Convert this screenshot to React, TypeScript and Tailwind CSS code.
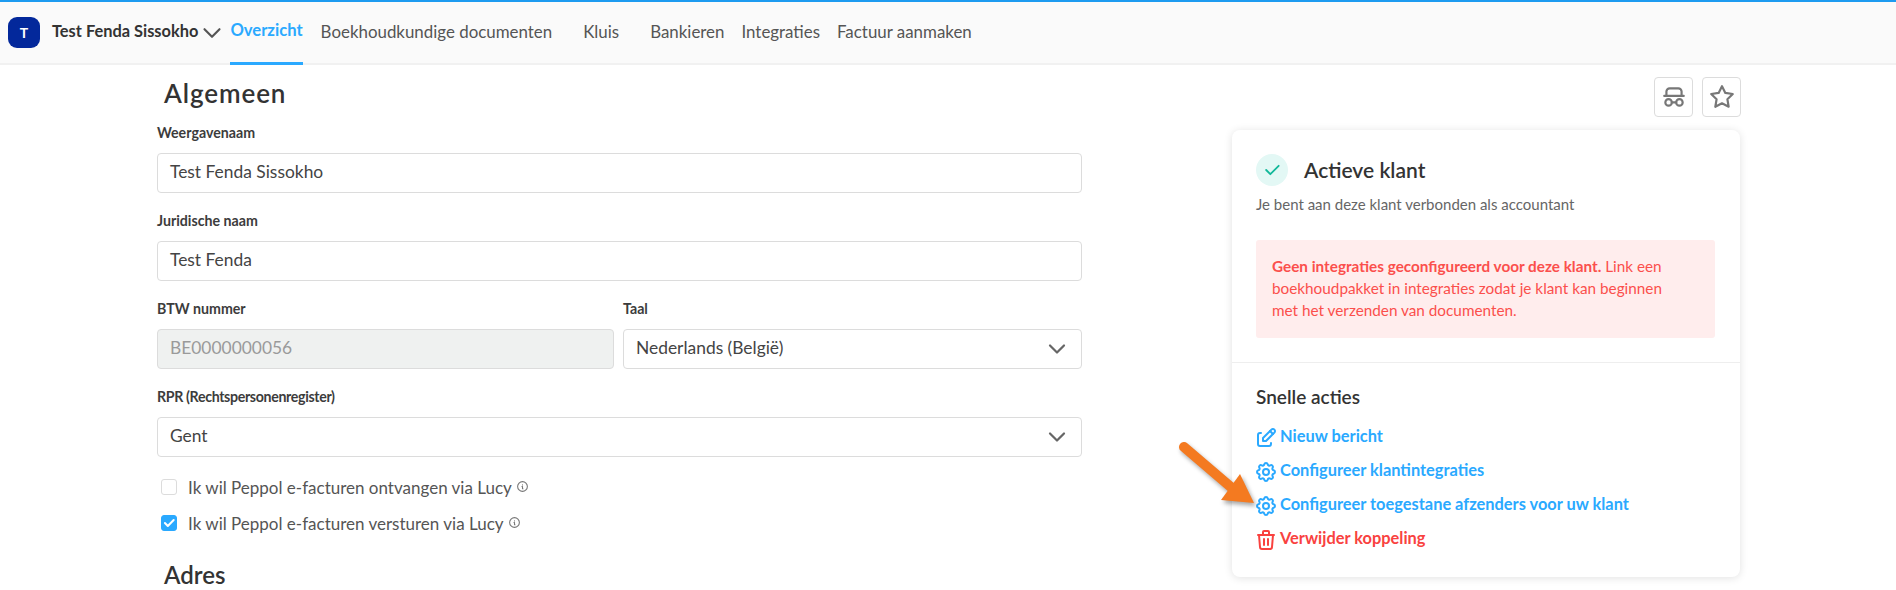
import { TbCheck, TbChevronDown, TbEdit, TbInfoCircle, TbSettings, TbSpy, TbStar, TbTrash } from "react-icons/tb";

const tabs = [
  { label: "Boekhoudkundige documenten", className: "ml-[18px]" },
  { label: "Kluis", className: "ml-[31px]" },
  { label: "Bankieren", className: "ml-[31px]" },
  { label: "Integraties", className: "ml-[17px]" },
  { label: "Factuur aanmaken", className: "ml-[17px]" },
];

const actions = [
  { icon: TbEdit, label: "Nieuw bericht", className: "text-[#2aa9ff]" },
  { icon: TbSettings, label: "Configureer klantintegraties", className: "text-[#2aa9ff]" },
  { icon: TbSettings, label: "Configureer toegestane afzenders voor uw klant", className: "text-[#2aa9ff]" },
  { icon: TbTrash, label: "Verwijder koppeling", className: "text-[#f9423f]" },
];

function Label({ children, className = "" }: { children: string; className?: string }) {
  return <label className={`block h-[20px] text-[14.2px] leading-[20px] font-bold text-[#3c3c3c] ${className}`}>{children}</label>;
}

function Field({ value, disabled, select }: { value: string; disabled?: boolean; select?: boolean }) {
  return (
    <div
      className={`mt-[10px] flex h-[40px] items-center justify-between rounded-[4px] border border-[#dcdcdc] pl-[12px] pr-[10px] text-[17.4px] ${
        disabled ? "bg-[#eff1f0] text-[#9a9a9a]" : "bg-white text-[#444]"
      }`}
    >
      <span className="-mt-[2px]">{value}</span>
      {select && <TbChevronDown className="text-[#666] text-[28px]" strokeWidth={1.9} />}
    </div>
  );
}

function Check({ label, checked }: { label: string; checked?: boolean }) {
  return (
    <div className="flex h-[16px] items-center pl-[4px] text-[17px] text-[#555]">
      <span
        className={`flex h-[16px] w-[16px] shrink-0 items-center justify-center rounded-[3px] border ${
          checked ? "border-[#2aa9ff] bg-[#2aa9ff]" : "border-[#dcdcdc] bg-white"
        }`}
      >
        {checked && <TbCheck className="text-white text-[14px]" strokeWidth={3.5} />}
      </span>
      <span className="ml-[11px] mt-[1px]">{label}</span>
      <TbInfoCircle className="ml-[4px] mb-[2px] text-[#777] text-[13px]" />
    </div>
  );
}

export default function App() {
  return (
    <div className="relative h-[590px] overflow-hidden bg-white font-['Lato','Liberation_Sans',sans-serif]">
      {/* top nav */}
      <nav className="flex h-[65px] border-t-2 border-b-2 border-t-[#1d9bf0] border-b-[#f1f1f1] bg-[#fafafa] pl-[8px]">
        <div className="mt-[15px] flex h-[31px] w-[32px] items-center justify-center rounded-[9px] bg-[#03289b] text-[14px] font-bold text-white">
          T
        </div>
        <span className="ml-[12px] mt-[18px] text-[16.4px] leading-[22px] font-bold text-[#333]">Test Fenda Sissokho</span>
        <TbChevronDown className="-ml-[1px] mt-[16px] shrink-0 text-[#555] text-[30px]" strokeWidth={1.7} />
        <div className="ml-[3px] h-[63px] border-b-[3px] border-[#2aa9ff] pt-[17px] text-[16.6px] leading-[22px] font-bold text-[#2aa9ff]">
          Overzicht
        </div>
        {tabs.map((tab) => (
          <span key={tab.label} className={`${tab.className} mt-[19px] text-[16.9px] leading-[22px] text-[#555]`}>
            {tab.label}
          </span>
        ))}
      </nav>

      <main className="flex pl-[157px]">
        {/* form */}
        <div className="w-[925px]">
          <h2 className="ml-[7px] mt-[10px] h-[36px] text-[26px] leading-[36px] font-semibold tracking-[0.9px] text-[#333]">Algemeen</h2>
          <div className="mt-[12px]">
            <Label>Weergavenaam</Label>
            <Field value="Test Fenda Sissokho" />
          </div>
          <div className="mt-[18px]">
            <Label>Juridische naam</Label>
            <Field value="Test Fenda" />
          </div>
          <div className="mt-[18px] grid grid-cols-[457px_1fr] gap-[9px]">
            <div>
              <Label>BTW nummer</Label>
              <Field value="BE0000000056" disabled />
            </div>
            <div>
              <Label>Taal</Label>
              <Field value="Nederlands (België)" select />
            </div>
          </div>
          <div className="mt-[18px]">
            <Label className="tracking-[-0.35px]">RPR (Rechtspersonenregister)</Label>
            <Field value="Gent" select />
          </div>
          <div className="mt-[22px] flex flex-col gap-[20px]">
            <Check label="Ik wil Peppol e-facturen ontvangen via Lucy" />
            <Check label="Ik wil Peppol e-facturen versturen via Lucy" checked />
          </div>
          <h2 className="ml-[7px] mt-[26px] h-[36px] text-[24px] leading-[36px] font-semibold text-[#333]">Adres</h2>
        </div>

        {/* side panel */}
        <aside className="ml-[150px] w-[509px]">
          <div className="mt-[12px] flex justify-end gap-[9px]">
            <button className="flex h-[40px] w-[39px] items-center justify-center rounded-[4px] border border-[#dcdcdc] bg-white text-[#777] text-[26px]">
              <TbSpy />
            </button>
            <button className="flex h-[40px] w-[39px] items-center justify-center rounded-[4px] border border-[#dcdcdc] bg-white text-[#777] text-[26px]">
              <TbStar />
            </button>
          </div>
          <div className="mt-[13px] h-[447px] w-[508px] rounded-[8px] bg-white shadow-[0_1px_8px_rgba(0,0,0,0.12)]">
            <div className="h-[233px] border-b border-[#eeeeee] px-[24px] pt-[24px]">
              <div className="flex items-center">
                <span className="flex h-[32px] w-[32px] items-center justify-center rounded-full bg-[#e3f8f5] text-[#12b89a] text-[20px]">
                  <TbCheck strokeWidth={2.2} />
                </span>
                <span className="ml-[16px] text-[21px] font-semibold text-[#333]">Actieve klant</span>
              </div>
              <p className="mt-[7px] text-[15px] leading-[22px] text-[#666]">Je bent aan deze klant verbonden als accountant</p>
              <div className="mt-[25px] h-[98px] w-[459px] rounded-[3px] bg-[#ffeded] px-[16px] py-[15px] text-[15.3px] leading-[22px] text-[#fb4f4c]">
                <b className="font-bold">Geen integraties geconfigureerd voor deze klant.</b> Link een
                <br />
                boekhoudpakket in integraties zodat je klant kan beginnen
                <br />
                met het verzenden van documenten.
              </div>
            </div>
            <div className="px-[24px] pt-[22px]">
              <h3 className="h-[24px] text-[19px] leading-[24px] font-semibold text-[#333]">Snelle acties</h3>
              <ul className="mt-[16px] flex flex-col gap-[10px]">
                {actions.map((action) => (
                  <li key={action.label} className={`flex h-[24px] items-center text-[16.4px] font-bold ${action.className}`}>
                    <action.icon className="text-[24px] -ml-[2px] mt-[2px] shrink-0" />
                    <span className="ml-[2px] -mt-[1px]">{action.label}</span>
                  </li>
                ))}
              </ul>
            </div>
          </div>
        </aside>
      </main>

      {/* annotation arrow */}
      <svg className="absolute left-[1170px] top-[436px] drop-shadow-[2px_3px_2px_rgba(0,0,0,0.35)]" width="90" height="75" viewBox="0 0 90 75">
        <path d="M14 11 L62 52" stroke="#f47a20" strokeWidth="10" strokeLinecap="round" fill="none" />
        <path d="M84 67 L51 64 L70 38 Z" fill="#f47a20" />
      </svg>
    </div>
  );
}
